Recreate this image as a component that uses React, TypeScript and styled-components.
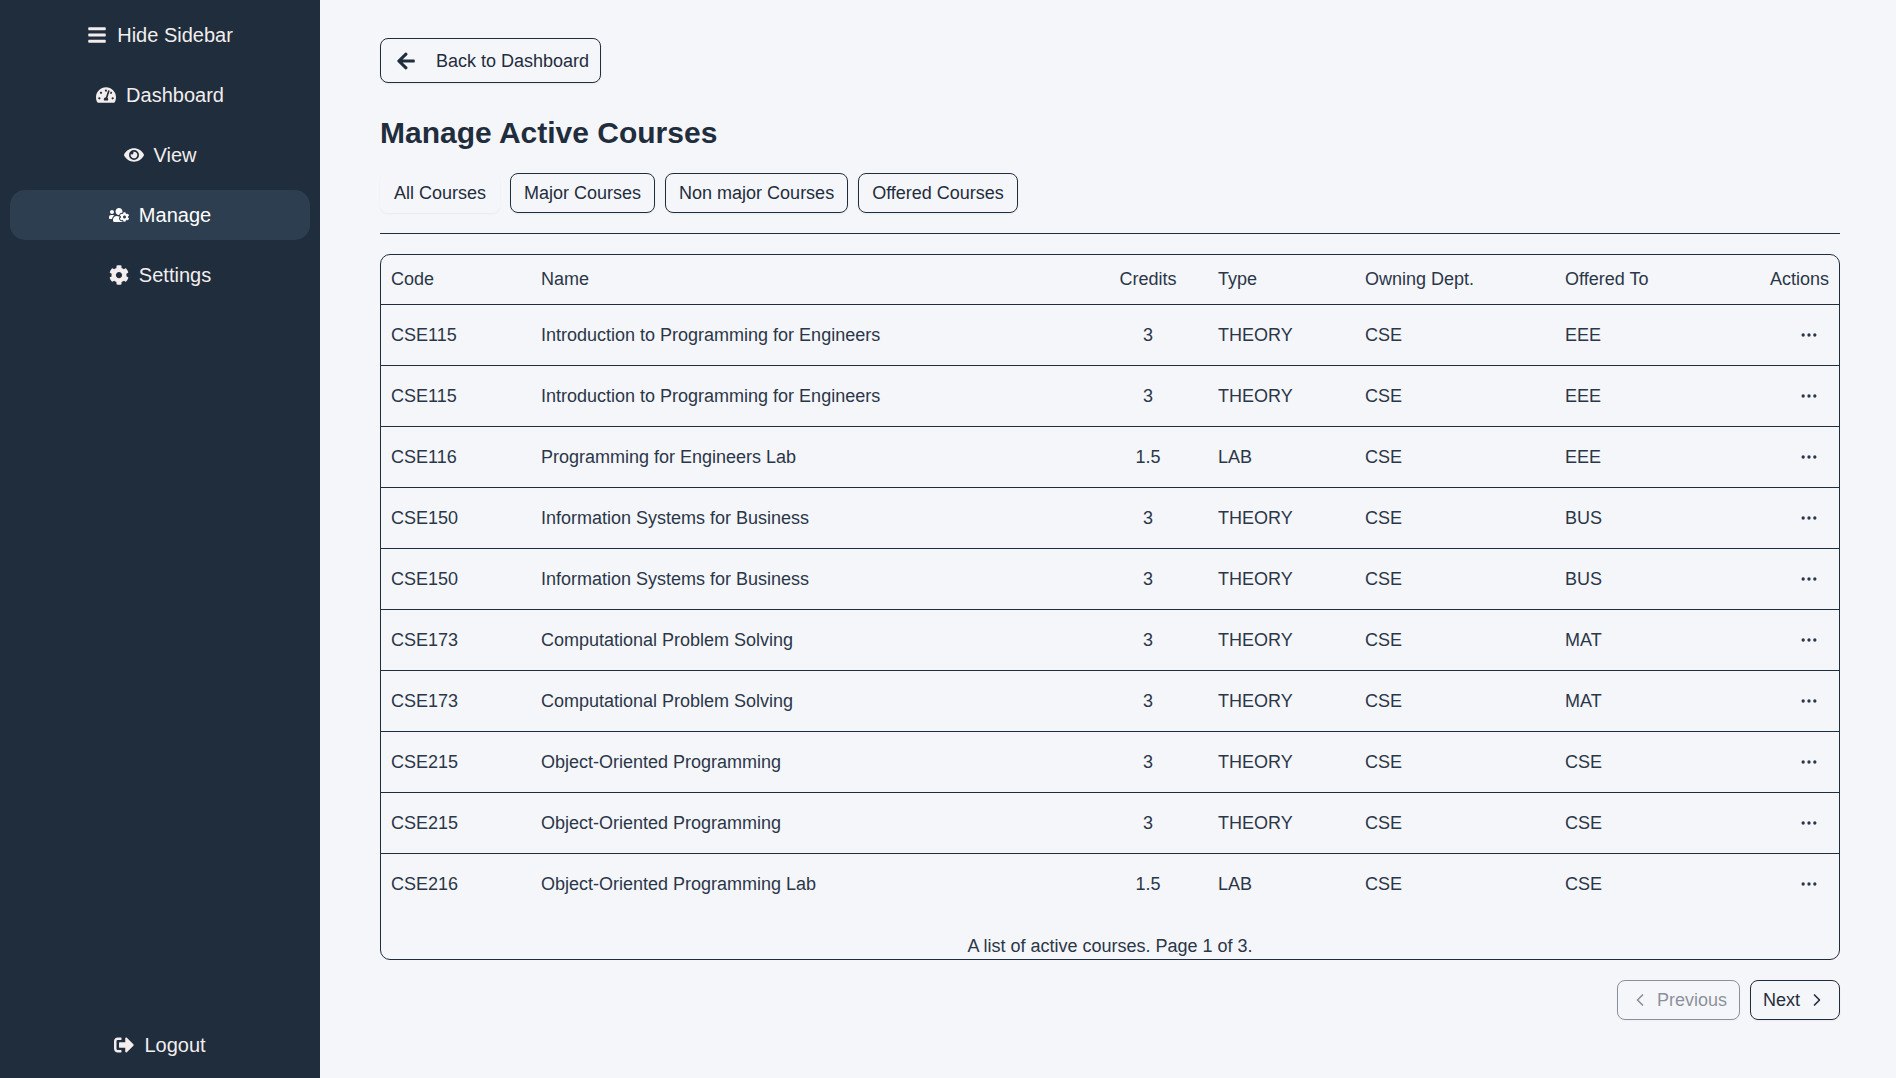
import React from "react";
import styled, { createGlobalStyle, css } from "styled-components";
import {
  FaArrowLeft,
  FaBars,
  FaCog,
  FaEye,
  FaSignOutAlt,
  FaTachometerAlt,
  FaUsersCog,
} from "react-icons/fa";
import { ChevronLeft, ChevronRight, Ellipsis } from "lucide-react";

const ink = "#1f2d3d";
const paper = "#f5f6fa";

const GlobalStyle = createGlobalStyle`
  *, *::before, *::after { box-sizing: border-box; }
  body {
    margin: 0;
    background: ${paper};
    color: ${ink};
    font-family: "Liberation Sans", Arial, sans-serif;
    font-size: 18px;
    line-height: 25px;
  }
  button { font: inherit; color: inherit; cursor: pointer; }
`;

const Shell = styled.div`
  display: flex;
  min-height: 100vh;
`;

const Sidebar = styled.nav`
  display: flex;
  flex-direction: column;
  justify-content: space-between;
  flex: 0 0 320px;
  padding: 10px 10px 8px;
  background: ${ink};
`;

const NavGroup = styled.div`
  display: flex;
  flex-direction: column;
  gap: 10px;
`;

const navItem = css<{ $active?: boolean }>`
  display: flex;
  align-items: center;
  justify-content: center;
  gap: 10px;
  height: 50px;
  border: 0;
  border-radius: 15px;
  background: ${(p) => (p.$active ? "#2c3e50" : "transparent")};
  color: ${(p) => (p.$active ? "#ffffff" : "#f3eded")};
  font-size: 20px;
  line-height: 30px;
  text-decoration: none;
`;

const NavLink = styled.a<{ $active?: boolean }>`
  ${navItem}
`;

const NavButton = styled.button<{ $active?: boolean }>`
  ${navItem}
`;

const Main = styled.main`
  flex: 1;
  min-width: 0;
  padding: 38px 56px 56px 60px;
`;

const OutlineButton = styled.button<{ $plain?: boolean }>`
  display: inline-flex;
  align-items: center;
  height: 40px;
  padding: ${(p) => (p.$plain ? "0 14px" : "0 13px")};
  border: ${(p) => (p.$plain ? "0" : `1px solid ${ink}`)};
  border-radius: 8px;
  background: transparent;
  box-shadow: 0 1px 2px rgba(0, 0, 0, 0.05);
  line-height: 24px;
  white-space: nowrap;
`;

const BackButton = styled(OutlineButton)`
  height: 45px;
  gap: 20px;
  padding: 0 11px 0 15px;
`;

const PageButton = styled(OutlineButton)`
  gap: 7px;
  padding: 0 12px;

  &:disabled {
    opacity: 0.5;
    cursor: default;
  }
`;

const Title = styled.h1`
  margin: 30px 0 20px;
  font-size: 30px;
  line-height: 40px;
  font-weight: 700;
`;

const Filters = styled.div`
  display: flex;
  flex-wrap: wrap;
  gap: 10px;
  padding-bottom: 20px;
  border-bottom: 1px solid ${ink};
`;

const TableFrame = styled.div`
  margin: 20px 0;
  border: 1px solid ${ink};
  border-radius: 10px;
  overflow: hidden;
`;

const Table = styled.table`
  width: 100%;
  table-layout: fixed;
  border-collapse: separate;
  border-spacing: 0;
  caption-side: bottom;
  color: #2a3748;
`;

const Caption = styled.caption`
  padding-top: 20px;
`;

const Col = styled.col<{ $width?: number }>`
  width: ${(p) => (p.$width ? `${p.$width}px` : "auto")};
`;

type Align = "left" | "center" | "right";

const HeadCell = styled.th<{ $align?: Align }>`
  height: 50px;
  padding: 0 10px;
  border-bottom: 1px solid ${ink};
  font-weight: 400;
  text-align: ${(p) => p.$align ?? "left"};
`;

const Cell = styled.td<{ $align?: Align }>`
  height: 61px;
  padding: 0 10px;
  border-bottom: 1px solid ${ink};
  text-align: ${(p) => p.$align ?? "left"};

  tr:last-child > & {
    height: 60px;
    border-bottom: 0;
  }
`;

const MenuButton = styled.button`
  display: inline-flex;
  align-items: center;
  justify-content: center;
  width: 40px;
  height: 40px;
  padding: 0;
  border: 0;
  background: transparent;
  vertical-align: middle;
`;

const Pager = styled.div`
  display: flex;
  justify-content: flex-end;
  gap: 10px;
`;

const navigation = [
  { label: "Dashboard", icon: FaTachometerAlt },
  { label: "View", icon: FaEye },
  { label: "Manage", icon: FaUsersCog, active: true },
  { label: "Settings", icon: FaCog },
];

const filters = ["All Courses", "Major Courses", "Non major Courses", "Offered Courses"];

const columns: { label: string; width?: number; align?: Align }[] = [
  { label: "Code", width: 150 },
  { label: "Name" },
  { label: "Credits", width: 120, align: "center" },
  { label: "Type", width: 147 },
  { label: "Owning Dept.", width: 200 },
  { label: "Offered To", width: 165 },
  { label: "Actions", width: 119, align: "right" },
];

const courses = [
  ["CSE115", "Introduction to Programming for Engineers", "3", "THEORY", "CSE", "EEE"],
  ["CSE115", "Introduction to Programming for Engineers", "3", "THEORY", "CSE", "EEE"],
  ["CSE116", "Programming for Engineers Lab", "1.5", "LAB", "CSE", "EEE"],
  ["CSE150", "Information Systems for Business", "3", "THEORY", "CSE", "BUS"],
  ["CSE150", "Information Systems for Business", "3", "THEORY", "CSE", "BUS"],
  ["CSE173", "Computational Problem Solving", "3", "THEORY", "CSE", "MAT"],
  ["CSE173", "Computational Problem Solving", "3", "THEORY", "CSE", "MAT"],
  ["CSE215", "Object-Oriented Programming", "3", "THEORY", "CSE", "CSE"],
  ["CSE215", "Object-Oriented Programming", "3", "THEORY", "CSE", "CSE"],
  ["CSE216", "Object-Oriented Programming Lab", "1.5", "LAB", "CSE", "CSE"],
];

export default function App() {
  return (
    <>
      <GlobalStyle />
      <Shell>
        <Sidebar>
          <NavGroup>
            <NavButton type="button">
              <FaBars />
              Hide Sidebar
            </NavButton>
            {navigation.map(({ label, icon: Icon, active }) => (
              <NavLink key={label} href="#" $active={active}>
                <Icon />
                {label}
              </NavLink>
            ))}
          </NavGroup>
          <NavButton type="button">
            <FaSignOutAlt />
            Logout
          </NavButton>
        </Sidebar>

        <Main>
          <BackButton type="button">
            <FaArrowLeft size={20} />
            Back to Dashboard
          </BackButton>
          <Title>Manage Active Courses</Title>
          <Filters>
            {filters.map((label, i) => (
              <OutlineButton key={label} type="button" $plain={i === 0}>
                {label}
              </OutlineButton>
            ))}
          </Filters>

          <TableFrame>
            <Table>
              <Caption>A list of active courses. Page 1 of 3.</Caption>
              <colgroup>
                {columns.map((c) => (
                  <Col key={c.label} $width={c.width} />
                ))}
              </colgroup>
              <thead>
                <tr>
                  {columns.map((c) => (
                    <HeadCell key={c.label} scope="col" $align={c.align}>
                      {c.label}
                    </HeadCell>
                  ))}
                </tr>
              </thead>
              <tbody>
                {courses.map((course, row) => (
                  <tr key={row}>
                    {course.map((value, i) => (
                      <Cell key={i} $align={columns[i].align}>
                        {value}
                      </Cell>
                    ))}
                    <Cell $align="right">
                      <MenuButton type="button" aria-label="Open menu">
                        <Ellipsis size={20} />
                      </MenuButton>
                    </Cell>
                  </tr>
                ))}
              </tbody>
            </Table>
          </TableFrame>

          <Pager>
            <PageButton type="button" disabled>
              <ChevronLeft size={20} />
              Previous
            </PageButton>
            <PageButton type="button">
              Next
              <ChevronRight size={20} />
            </PageButton>
          </Pager>
        </Main>
      </Shell>
    </>
  );
}
